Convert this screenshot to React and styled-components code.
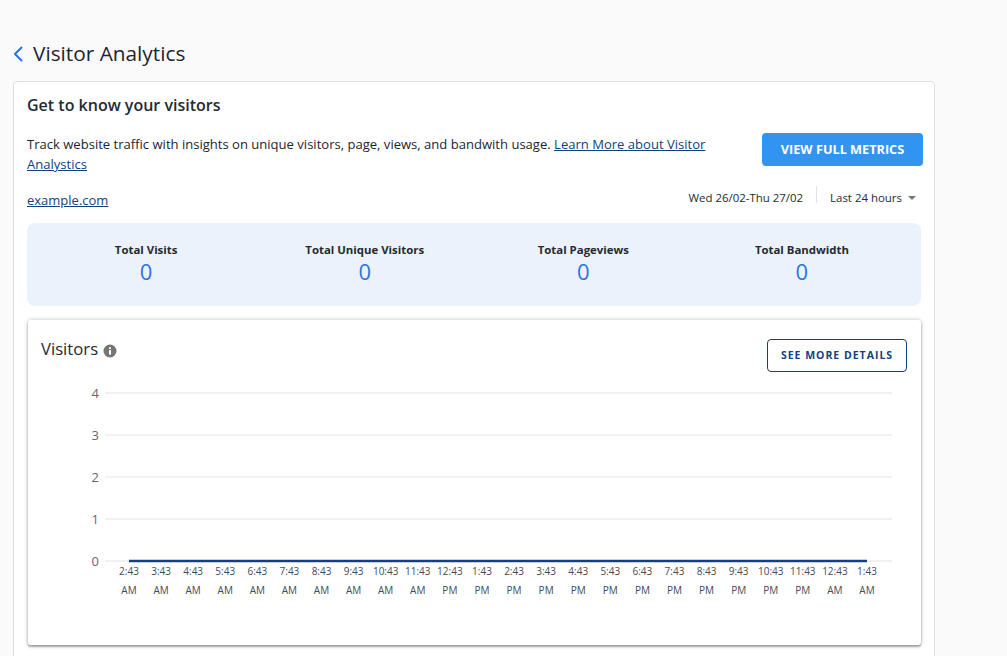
import React from "react";
import styled, { createGlobalStyle } from "styled-components";

const Global = createGlobalStyle`
  html, body { margin: 0; padding: 0; height: 100%; overflow: hidden; background: #fafafa; }
  body { font-family: "Open Sans", "Liberation Sans", sans-serif; color: #1d2530; }
`;
const Page = styled.div`
  width: 1007px; height: 656px; overflow: hidden; box-sizing: border-box;
  padding: 36px 72px 0 13px;
`;
const Header = styled.header`
  display: flex; align-items: center; gap: 10px; height: 34px; margin-bottom: 11px;
`;
const BackIcon = styled.svg`width: 10px; height: 16px; flex: none; margin-top: 1px;`;
const Title = styled.h1`
  margin: 0; font-size: 20.8px; font-weight: 400; line-height: 34px; color: #1d2530;
`;
const Card = styled.section`
  background: #fff; border: 1px solid #e0e0e0; border-radius: 4px;
  padding: 11px 13px 0 13px; height: 640px; box-sizing: border-box;
`;
const CardTitle = styled.h2`
  margin: 0; font-size: 16px; font-weight: 600; line-height: 24px; color: #252a31;
`;
const IntroRow = styled.div`
  display: flex; justify-content: space-between; align-items: flex-start; margin-top: 17px;
`;
const Intro = styled.p`
  margin: 0; width: 700px; font-size: 13.06px; line-height: 20px; color: #1d2530;
`;
const TextLink = styled.a`
  color: #123f80; text-decoration: underline;
`;
const PrimaryButton = styled.button`
  width: 161px; height: 33px; margin: -1px -2px 0 0; padding: 0 0 1px; border: 0; border-radius: 4px;
  background: #3194f0; color: #fff; font: 700 12.7px "Open Sans", sans-serif; cursor: pointer;
`;
const RangeRow = styled.div`
  display: flex; justify-content: space-between; align-items: center; height: 22px; margin-top: 12px;
`;
const DomainLink = styled(TextLink)`
  font-size: 13px; line-height: 22px; margin-top: 5px;
`;
const RangeControls = styled.div`
  display: flex; align-items: center; height: 22px; font-size: 11.45px; color: #252a31; padding-right: 5px;
`;
const RangeDate = styled.span`
  padding-right: 13px;
`;
const RangeDivider = styled.span`
  align-self: flex-start; width: 1px; height: 17px; background: #e2e2e2;
`;
const RangeSelect = styled.span`
  display: flex; align-items: center; gap: 6px; padding-left: 13px;
`;
const Caret = styled.span`
  width: 0; height: 0; border-left: 4.5px solid transparent; border-right: 4.5px solid transparent;
  border-top: 4px solid #777; margin-top: 2px;
`;
const Stats = styled.div`
  display: grid; grid-template-columns: repeat(4, 218.6px); justify-content: center;
  height: 83px; box-sizing: border-box; margin: 15px 0 0 0; padding: 20px 0 0 0;
  background: #ebf2fc; border-radius: 8px;
`;
const Stat = styled.div`text-align: center;`;
const StatLabel = styled.div`
  font-size: 11.4px; font-weight: 700; line-height: 14px; color: #252a31;
`;
const StatValue = styled.div`
  font-size: 22px; font-weight: 400; line-height: 28px; color: #2f74e0;
`;
const ChartCard = styled.section`
  margin: 14px 0 0 1px; height: 325px; box-sizing: border-box; padding: 18px 14px 0 13px;
  background: #fff; border-radius: 3px;
  box-shadow: 0 2px 2px rgba(0,0,0,.3), 0 0 4px rgba(0,0,0,.25);
`;
const ChartHead = styled.div`
  display: flex; justify-content: space-between; align-items: flex-start;
`;
const ChartTitle = styled.h3`
  display: flex; align-items: center; gap: 5px; margin: 0;
  font-size: 16.7px; font-weight: 500; line-height: 22px; color: #252a31;
`;
const InfoIcon = styled.svg`width: 14px; height: 14px; margin-top: 3px;`;
const OutlineButton = styled.button`
  width: 140px; height: 33px; margin-top: 1px; padding: 0 0 2px; background: #fff; border: 1px solid #123f80; border-radius: 4px;
  color: #123f80; font: 700 10.5px "Open Sans", sans-serif; letter-spacing: 1px; cursor: pointer;
`;
const ChartSvg = styled.svg`
  display: block; width: 893px; height: 240px; margin: 1px 0 0 -13px;
`;

const times = ["2:43","3:43","4:43","5:43","6:43","7:43","8:43","9:43","10:43","11:43","12:43","1:43","2:43","3:43","4:43","5:43","6:43","7:43","8:43","9:43","10:43","11:43","12:43","1:43"];
const period = (i) => (i < 10 || i > 21 ? "AM" : "PM");
const stats = ["Total Visits", "Total Unique Visitors", "Total Pageviews", "Total Bandwidth"];
// chart svg origin in page coords
const ox = 28, oy = 373;

export default function App() {
  return (
    <>
      <Global />
      <Page>
        <Header>
          <BackIcon viewBox="0 0 10 16" fill="none" stroke="#2474e0" strokeWidth="2" strokeLinecap="round" strokeLinejoin="round">
            <path d="M8.5 1.5 2 8l6.5 6.5" />
          </BackIcon>
          <Title>Visitor Analytics</Title>
        </Header>
        <Card>
          <CardTitle>Get to know your visitors</CardTitle>
          <IntroRow>
            <Intro>
              Track website traffic with insights on unique visitors, page, views, and bandwith usage.{" "}
              <TextLink href="#">Learn More about Visitor Analystics</TextLink>
            </Intro>
            <PrimaryButton>VIEW FULL METRICS</PrimaryButton>
          </IntroRow>
          <RangeRow>
            <DomainLink href="#">example.com</DomainLink>
            <RangeControls>
              <RangeDate>Wed 26/02-Thu 27/02</RangeDate>
              <RangeDivider />
              <RangeSelect>Last 24 hours <Caret /></RangeSelect>
            </RangeControls>
          </RangeRow>
          <Stats>
            {stats.map((s) => (
              <Stat key={s}>
                <StatLabel>{s}</StatLabel>
                <StatValue>0</StatValue>
              </Stat>
            ))}
          </Stats>
          <ChartCard>
            <ChartHead>
              <ChartTitle>
                Visitors
                <InfoIcon viewBox="0 0 14 14">
                  <circle cx="7" cy="7" r="6.5" fill="#757575" />
                  <rect x="6" y="6" width="2" height="4.6" fill="#fff" />
                  <rect x="6" y="3.3" width="2" height="1.7" fill="#fff" />
                </InfoIcon>
              </ChartTitle>
              <OutlineButton>SEE MORE DETAILS</OutlineButton>
            </ChartHead>
            <ChartSvg viewBox="0 0 893 240" fontFamily="'Open Sans', sans-serif">
              {[4, 3, 2, 1, 0].map((v, i) => {
                const y = 393 + i * 42 - oy;
                return (
                  <g key={v}>
                    <line x1={105 - ox} x2={892 - ox} y1={y} y2={y} stroke="#f1f1f1" strokeWidth="2" />
                    <text x={99 - ox} y={y + 5} textAnchor="end" fontSize="13" fill="#6e6463">{v}</text>
                  </g>
                );
              })}
              <line x1={129 - ox} x2={867 - ox} y1={561 - oy} y2={561 - oy} stroke="#173e80" strokeWidth="2.4" />
              {times.map((t, i) => {
                const x = 129 + i * (738 / 23) - ox;
                return (
                  <g key={i} fontSize="10" fill="#444b55" textAnchor="middle">
                    <text x={x} y={575 - oy}>{t}</text>
                    <text x={x} y={594 - oy}>{period(i)}</text>
                  </g>
                );
              })}
            </ChartSvg>
          </ChartCard>
        </Card>
      </Page>
    </>
  );
}
